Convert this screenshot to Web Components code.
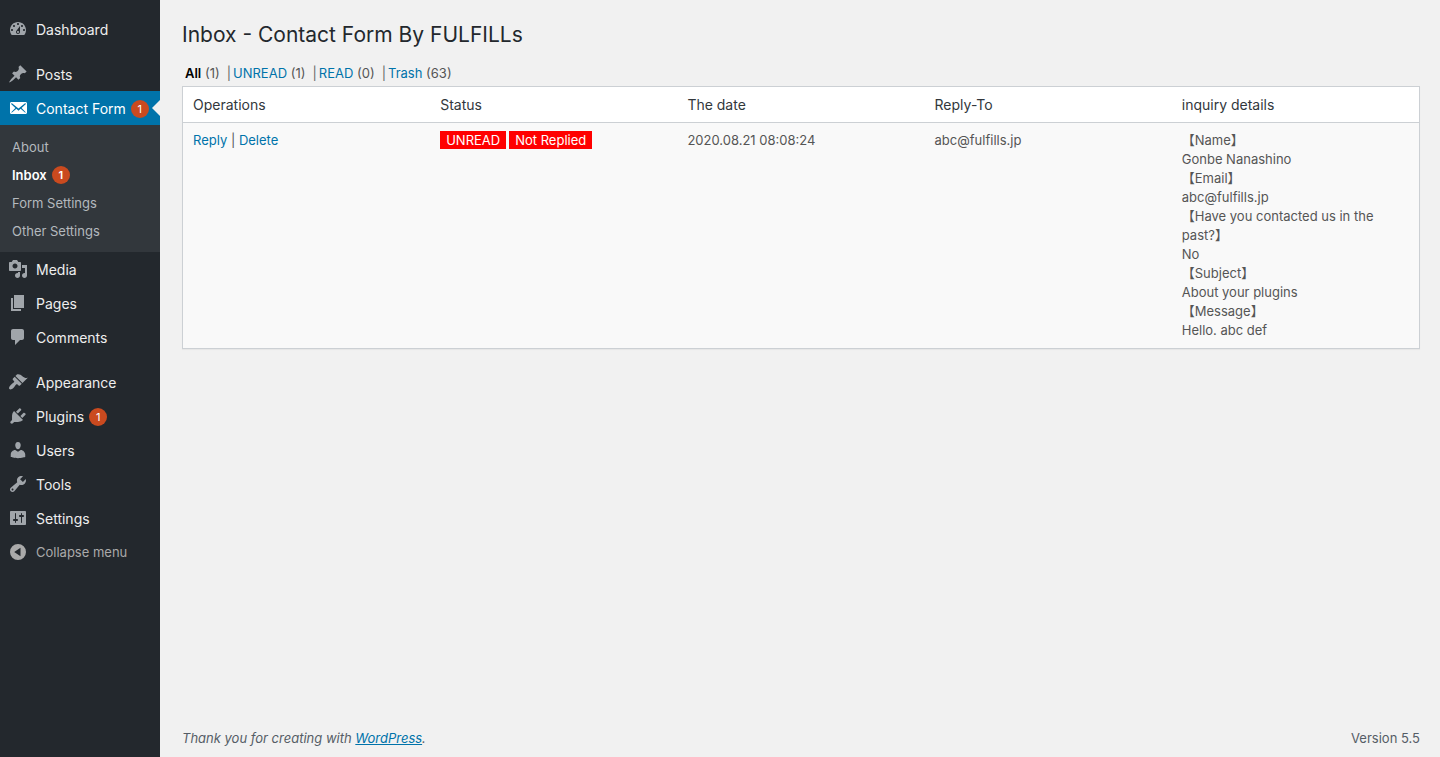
<!DOCTYPE html>
<html lang="en">
<head>
<meta charset="utf-8">
<meta name="viewport" content="width=device-width, initial-scale=1">
<title>Inbox - Contact Form By FULFILLs</title>
<style>
  html, body { margin: 0; }
  body {
    background: #f1f1f1;
    color: #444;
    font: 13px/19px Inter, "Noto Sans CJK JP", sans-serif;
  }
</style>
</head>
<body>
<admin-page>
  <admin-menu slot="menu">
    <menu-item icon="dashboard">Dashboard</menu-item>
    <menu-gap></menu-gap>
    <menu-item icon="post">Posts</menu-item>
    <menu-item icon="mail" current>Contact Form<count-badge slot="badge">1</count-badge>
      <sub-item slot="sub">About</sub-item>
      <sub-item slot="sub" current>Inbox<count-badge slot="badge">1</count-badge></sub-item>
      <sub-item slot="sub">Form Settings</sub-item>
      <sub-item slot="sub">Other Settings</sub-item>
    </menu-item>
    <menu-item icon="media">Media</menu-item>
    <menu-item icon="page">Pages</menu-item>
    <menu-item icon="comment">Comments</menu-item>
    <menu-gap></menu-gap>
    <menu-item icon="appearance">Appearance</menu-item>
    <menu-item icon="plugin">Plugins<count-badge slot="badge">1</count-badge></menu-item>
    <menu-item icon="user">Users</menu-item>
    <menu-item icon="tool">Tools</menu-item>
    <menu-item icon="setting">Settings</menu-item>
    <collapse-button>Collapse menu</collapse-button>
  </admin-menu>
  <page-title>Inbox - Contact Form By FULFILLs</page-title>
  <status-views></status-views>
  <inbox-table></inbox-table>
  <admin-footer slot="footer"></admin-footer>
</admin-page>

<script>
const ICONS = {
  dashboard: 'M3.76 16h12.48c1.1-1.37 1.76-3.11 1.76-5 0-4.42-3.58-8-8-8s-8 3.58-8 8c0 1.89.66 3.63 1.76 5zM10 4c.55 0 1 .45 1 1s-.45 1-1 1-1-.45-1-1 .45-1 1-1zM6 6c.55 0 1 .45 1 1s-.45 1-1 1-1-.45-1-1 .45-1 1-1zm8 0c.55 0 1 .45 1 1s-.45 1-1 1-1-.45-1-1 .45-1 1-1zm-5.37 5.55L12 7v6c0 1.1-.9 2-2 2s-2-.9-2-2c0-.57.24-1.08.63-1.45zM4 10c.55 0 1 .45 1 1s-.45 1-1 1-1-.45-1-1 .45-1 1-1zm12 0c.55 0 1 .45 1 1s-.45 1-1 1-1-.45-1-1 .45-1 1-1zm-5 3c0-.55-.45-1-1-1s-1 .45-1 1 .45 1 1 1 1-.45 1-1z',
  post: 'M10.44 3.02l1.82-1.82 6.36 6.35-1.83 1.82c-1.05-.68-2.48-.57-3.41.36l-.75.75c-.92.93-1.04 2.35-.35 3.41l-1.83 1.82-2.41-2.41-2.8 2.79c-.42.42-3.38 2.71-3.8 2.29s1.86-3.39 2.28-3.81l2.79-2.79L4.1 9.36l1.83-1.82c1.05.69 2.48.57 3.4-.36l.75-.75c.93-.92 1.05-2.35.36-3.41z',
  mail: 'M19 14.5v-9c0-.83-.67-1.5-1.5-1.5H3.49c-.83 0-1.5.67-1.5 1.5v9c0 .83.67 1.5 1.5 1.5H17.5c.83 0 1.5-.67 1.5-1.5zm-1.31-9.11c.33.33.15.67-.03.84L13.6 9.95l3.9 4.06c.12.14.2.36.06.51-.13.16-.43.15-.56.05l-4.37-3.73-2.14 1.95-2.13-1.95-4.37 3.73c-.13.1-.43.11-.56-.05-.14-.15-.06-.37.06-.51l3.9-4.06-4.06-3.72c-.18-.17-.36-.51-.03-.84s.67-.17.95.07l6.24 5.04 6.25-5.04c.28-.24.62-.4.95-.07z',
  media: 'M13 11V4c0-.55-.45-1-1-1h-1.67L9 1H5L3.67 3H2c-.55 0-1 .45-1 1v7c0 .55.45 1 1 1h10c.55 0 1-.45 1-1zM7 4.5c1.38 0 2.5 1.12 2.5 2.5S8.38 9.5 7 9.5 4.5 8.38 4.5 7 5.62 4.5 7 4.5zM14 6h5v10.5c0 1.38-1.12 2.5-2.5 2.5S14 17.88 14 16.5s1.12-2.5 2.5-2.5c.17 0 .34.02.5.05V9h-3V6zm-4 8.05V13h2v3.5c0 1.38-1.12 2.5-2.5 2.5S7 17.88 7 16.5 8.12 14 9.5 14c.17 0 .34.02.5.05z',
  page: 'M6 15V2h10v13H6zm-1 1h8v2H3V5h2v11z',
  comment: 'M5 2h9c1.1 0 2 .9 2 2v7c0 1.1-.9 2-2 2h-2l-5 5v-5H5c-1.1 0-2-.9-2-2V4c0-1.1.9-2 2-2z',
  appearance: 'M14.48 11.06L7.41 3.99l1.5-1.5c.5-.56 2.3-.47 3.51.32 1.21.8 1.43 1.28 2.91 2.1 1.18.64 2.45 1.26 4.45.85zm-.71.71L6.7 4.7 4.93 6.47c-.39.39-.39 1.02 0 1.41l1.06 1.06c.39.39.39 1.03 0 1.42-.6.6-1.43 1.11-2.21 1.69-.35.26-.7.53-1.01.84C1.43 14.23.4 16.08 1.4 17.07c.99 1 2.84-.03 4.18-1.36.31-.31.58-.66.85-1.02.57-.78 1.08-1.61 1.69-2.21.39-.39 1.02-.39 1.41 0l1.06 1.06c.39.39 1.02.39 1.41 0z',
  plugin: 'M13.11 4.36L9.87 7.6 8 5.73l3.24-3.24c.35-.34 1.05-.2 1.56.32.52.51.66 1.21.31 1.55zm-8 1.77l.91-1.12 9.01 9.01-1.19.84c-.71.71-2.63 1.16-3.82 1.16H6.14L4.9 17.26c-.59.59-1.54.59-2.12 0-.59-.58-.59-1.53 0-2.12l1.24-1.24v-3.88c0-1.13.4-3.19 1.09-3.89zm7.26 3.97l3.24-3.24c.34-.35 1.04-.21 1.55.31.52.51.66 1.21.31 1.55l-3.24 3.25z',
  user: 'M10 9.25c-2.27 0-2.73-3.44-2.73-3.44C7 4.02 7.82 2 9.97 2c2.16 0 2.98 2.02 2.71 3.81 0 0-.41 3.44-2.68 3.44zm0 2.57L12.72 10c2.39 0 4.52 2.33 4.52 4.53v2.49s-3.65 1.13-7.24 1.13c-3.65 0-7.24-1.13-7.24-1.13v-2.49c0-2.25 1.94-4.48 4.47-4.48z',
  tool: 'M16.68 9.77c-1.34 1.34-3.3 1.67-4.95.99l-5.41 6.52c-.99.99-2.59.99-3.58 0s-.99-2.59 0-3.57l6.52-5.42c-.68-1.65-.35-3.61.99-4.95 1.28-1.28 3.12-1.62 4.72-1.06l-2.89 2.89 2.82 2.82 2.86-2.87c.53 1.58.18 3.39-1.08 4.65zM3.81 16.21c.4.39 1.04.39 1.43 0 .4-.4.4-1.04 0-1.43-.39-.4-1.03-.4-1.43 0-.39.39-.39 1.03 0 1.43z',
  setting: 'M18 16V4c0-.55-.45-1-1-1H3c-.55 0-1 .45-1 1v12c0 .55.45 1 1 1h14c.55 0 1-.45 1-1zM8 11h1c.55 0 1 .45 1 1s-.45 1-1 1H8v1.5c0 .28-.22.5-.5.5s-.5-.22-.5-.5V13H6c-.55 0-1-.45-1-1s.45-1 1-1h1V5.5c0-.28.22-.5.5-.5s.5.22.5.5V11zm5-2h-1c-.55 0-1-.45-1-1s.45-1 1-1h1V5.5c0-.28.22-.5.5-.5s.5.22.5.5V7h1c.55 0 1 .45 1 1s-.45 1-1 1h-1v5.5c0 .28-.22.5-.5.5s-.5-.22-.5-.5V9z',
  collapse: 'M10 2a8 8 0 1 0 0 16 8 8 0 0 0 0-16zM12.5 5.8v8.4L6.2 10z'
};

const svg = name =>
  `<svg viewBox="0 0 20 20" width="20" height="20" aria-hidden="true"><path fill="currentColor" fill-rule="evenodd" d="${ICONS[name]}"/></svg>`;

const define = (tag, render) => customElements.define(tag, class extends HTMLElement {
  constructor() {
    super();
    this.attachShadow({ mode: 'open' });
  }
  connectedCallback() {
    const t = document.createElement('template');
    t.innerHTML = render(this);
    this.shadowRoot.replaceChildren(t.content.cloneNode(true));
  }
});

define('admin-page', () => `
  <style>
    :host { display: grid; grid-template-columns: 160px 1fr; min-height: 100vh; }
    .body { display: flex; flex-direction: column; padding: 0 20px 0 22px; min-width: 0; }
    main { flex: 1; }
  </style>
  <slot name="menu"></slot>
  <div class="body"><main><slot></slot></main><slot name="footer"></slot></div>`);

define('admin-menu', () => `
  <style>
    :host { display: block; background: #23282d; }
    nav { padding-top: 12px; }
  </style>
  <nav aria-label="Main menu"><slot></slot></nav>`);

define('menu-gap', () => `<style>:host { display: block; height: 11px; }</style>`);

define('menu-item', el => `
  <style>
    :host { display: block; }
    a {
      position: relative; display: flex; align-items: center; gap: 8px;
      height: 34px; padding-left: 8px;
      color: #eee; font-size: 14px; line-height: 18px; text-decoration: none; white-space: nowrap;
    }
    svg { color: #a0a5aa; flex: none; }
    .label { display: flex; align-items: center; gap: 5px; padding-top: 1px; }
    .sub { display: none; }
    :host([current]) a { background: #0073aa; color: #fff; }
    :host([current]) svg { color: #fff; }
    :host([current]) a::after {
      content: ""; position: absolute; right: 0; top: 9px;
      border: 8px solid transparent; border-left-width: 0; border-right-color: #f1f1f1;
    }
    :host([current]) .sub { display: block; padding: 8px 0 7px; background: #32373c; }
  </style>
  <a href="#">${svg(el.getAttribute('icon'))}<span class="label"><span><slot></slot></span><slot name="badge"></slot></span></a>
  <div class="sub"><slot name="sub"></slot></div>`);

define('sub-item', () => `
  <style>
    :host { display: block; }
    a {
      display: flex; align-items: center; gap: 5px; height: 28px; padding-left: 12px;
      color: #b4b9be; font-size: 13px; text-decoration: none;
    }
    :host([current]) a { color: #fff; font-weight: 600; }
  </style>
  <a href="#"><span><slot></slot></span><slot name="badge"></slot></a>`);

define('count-badge', () => `
  <style>
    :host {
      display: block; box-sizing: border-box; min-width: 18px; height: 18px; border-radius: 9px;
      background: #ca4a1f; color: #fff; font-size: 11px; line-height: 18px; text-align: center;
    }
  </style><slot></slot>`);

define('collapse-button', () => `
  <style>
    :host { display: block; }
    button {
      display: flex; align-items: center; gap: 8px; width: 100%; height: 34px;
      margin: 0; padding: 0 0 0 8px; border: 0; background: none; cursor: pointer;
      color: #aaa; font: inherit; font-size: 13px;
    }
  </style>
  <button type="button">${svg('collapse')}<span><slot></slot></span></button>`);

define('page-title', () => `
  <style>
    :host { display: block; padding: 20px 0 14px; }
    h1 { margin: 0; color: #23282d; font-size: 21px; font-weight: 400; line-height: 30px; }
  </style>
  <h1><slot></slot></h1>`);

define('status-views', () => `
  <style>
    :host { display: block; padding: 0 3px; color: #555; }
    ul { display: flex; gap: 7px; margin: 0; padding: 0 0 3px; list-style: none; }
    li + li::before { content: "|"; margin-right: 2px; color: #666; }
    a { color: #0073aa; text-decoration: none; }
    a.current { color: #000; font-weight: 600; }
  </style>
  <ul>
    <li><a class="current" href="#">All</a> (1)</li>
    <li><a href="#">UNREAD</a> (1)</li>
    <li><a href="#">READ</a> (0)</li>
    <li><a href="#">Trash</a> (63)</li>
  </ul>`);

define('status-tag', () => `
  <style>
    :host { display: block; padding: 0 6px; background: #f00; color: #fff; line-height: 18px; }
  </style><slot></slot>`);

define('inbox-table', () => `
  <style>
    :host { display: block; }
    table {
      width: 100%; table-layout: fixed; border-collapse: separate; border-spacing: 0;
      border: 1px solid #ccd0d4; background: #fff; box-shadow: 0 1px 1px rgba(0,0,0,.04);
    }
    th, td { padding: 8px 10px; text-align: left; vertical-align: top; overflow-wrap: break-word; }
    th { border-bottom: 1px solid #ccd0d4; color: #32373c; font-size: 14px; font-weight: 400; }
    td { background: #f9f9f9; color: #555; }
    a { color: #0073aa; text-decoration: none; }
    .tags { display: flex; gap: 3px; }
  </style>
  <table>
    <thead><tr>
      <th scope="col">Operations</th><th scope="col">Status</th><th scope="col">The date</th>
      <th scope="col">Reply-To</th><th scope="col">inquiry details</th>
    </tr></thead>
    <tbody><tr>
      <td><a href="#">Reply</a> | <a href="#">Delete</a></td>
      <td><div class="tags"><status-tag>UNREAD</status-tag><status-tag>Not Replied</status-tag></div></td>
      <td>2020.08.21 08:08:24</td>
      <td>abc@fulfills.jp</td>
      <td>【Name】<br>Gonbe Nanashino<br>【Email】<br>abc@fulfills.jp<br>【Have you contacted us in the past?】<br>No<br>【Subject】<br>About your plugins<br>【Message】<br>Hello. abc def</td>
    </tr></tbody>
  </table>`);

define('admin-footer', () => `
  <style>
    :host { display: block; color: #555d66; }
    footer { display: flex; justify-content: space-between; padding: 10px 0 9px; }
    a { color: #0073aa; }
  </style>
  <footer><em>Thank you for creating with <a href="#">WordPress</a>.</em><span>Version 5.5</span></footer>`);
</script>
</body>
</html>
